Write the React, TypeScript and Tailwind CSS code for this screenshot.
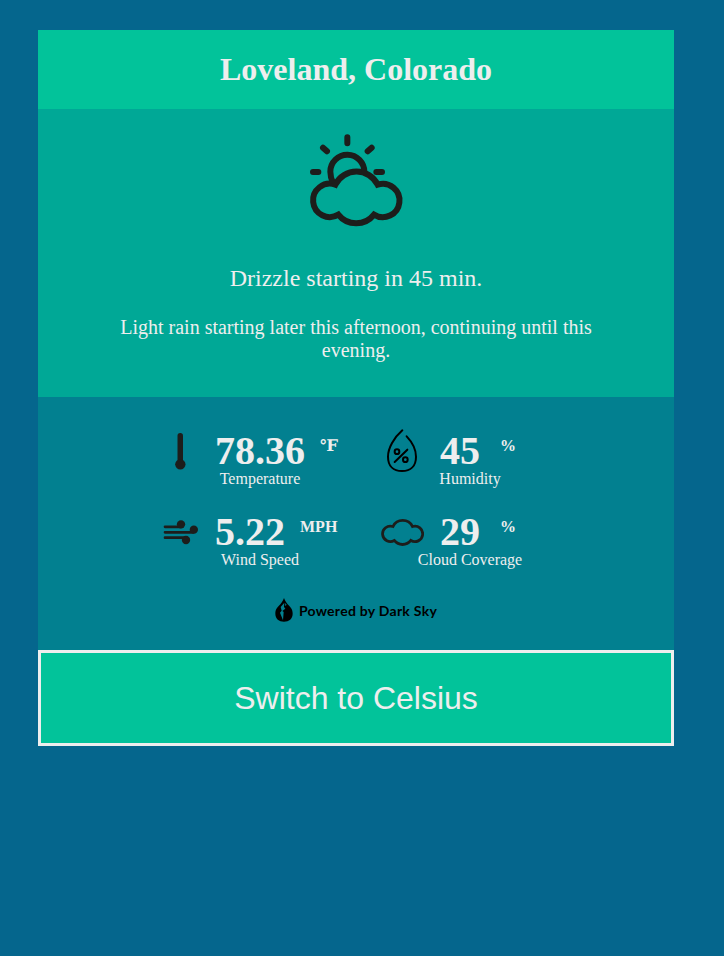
import type { ReactNode } from "react";

const cloudPath =
  "M118 182A50 50 0 1 0 127 272A68 68 0 0 0 234 272A50 50 0 1 0 245 182A71 71 0 0 0 118 182Z";

function PartlyCloudyIcon() {
  return (
    <svg className="h-28 w-30" viewBox="0 0 360 336" fill="none" stroke="#1d1d1b" strokeWidth="18">
      <path d={cloudPath} />
      <path d="M111 176Q103 159 103 143A51 51 0 0 1 205 144" />
      <path
        strokeLinecap="round"
        d="M154 40V58M81 71L93 82M227 71L215 82M51 144H67M241 144H258"
      />
    </svg>
  );
}

function ThermometerIcon() {
  return (
    <svg className="h-[37px] w-[11px]" viewBox="74 38 33 111" fill="#1d1d1b">
      <rect x="81.500" y="38" width="16.500" height="90" rx="8" />
      <circle cx="90" cy="132" r="15.5" />
    </svg>
  );
}

function HumidityIcon() {
  return (
    <svg className="mr-[2px] h-11 w-8" viewBox="48 27 96 132" fill="none" stroke="#000" strokeWidth="6" strokeLinecap="round">
      <path d="M97 31C72 53 54 84 54 110C54 138 70 153 96 153C122 153 138 138 138 110C138 87 127 67 110 49" />
      <circle cx="81" cy="95" r="7" />
      <circle cx="106" cy="119" r="7" />
      <path d="M74 126L112 89" />
    </svg>
  );
}

function WindIcon() {
  return (
    <svg className="ml-[2px] h-[26px] w-9" viewBox="40 45 108 78" fill="#1d1d1b" stroke="#1d1d1b">
      <path d="M46 68.500H94M46 85H131M46 101H107" strokeWidth="8" strokeLinecap="round" />
      <g stroke="none">
        <circle cx="94" cy="61" r="12.500" />
        <circle cx="132.500" cy="77" r="12.500" />
        <circle cx="109" cy="108" r="12.500" />
      </g>
    </svg>
  );
}

function CloudIcon() {
  return (
    <svg className="mr-[2px] h-[27px] w-[43px]" viewBox="41 134 278 173" fill="none" stroke="#1d1d1b" strokeWidth="18">
      <path d={cloudPath} />
    </svg>
  );
}

function DarkSkyLogo() {
  return (
    <svg className="h-6 w-[18px]" viewBox="0 0 54 72">
      <path
        d="M27 0C30 8 33 12 38 19C46 28 53 33 53 47C53 62 42 71 27 71C12 71 1 62 1 47C1 33 8 28 16 19C21 12 24 8 27 0Z"
        fill="#000"
      />
      <path d="M28 14L17 27L20 38L15 44L24 67L26 42L22 39L31 32L27 27Z" fill="#028090" />
      <path d="M30 15L31 24L35 20Z" fill="#028090" />
    </svg>
  );
}

type StatProps = {
  icon: ReactNode;
  value: string;
  unit: string;
  label: string;
  body: string;
  gap: string;
};

function Stat({ icon, value, unit, label, body, gap }: StatProps) {
  return (
    <div className="flex h-[81px]">
      <div className="flex h-[54px] w-[70px] shrink-0 items-center justify-center">{icon}</div>
      <div className={`flex flex-col items-center ${body}`}>
        <div className={`flex h-10 w-full items-start ${gap}`}>
          <span className="text-[40px] leading-[40px] font-bold">{value}</span>
          <span className="pt-[6px] font-['Liberation_Serif','DejaVu_Serif',serif] text-base leading-[18px] font-bold">
            {unit}
          </span>
        </div>
        <span className="-mt-px text-base leading-[18px] whitespace-nowrap">{label}</span>
      </div>
    </div>
  );
}

export default function App() {
  return (
    <div className="min-h-screen bg-[#05668d] px-[38px] pt-[30px] font-['Liberation_Serif',serif] text-[#eee]">
      <main className="w-[636px]">
        <header className="flex h-[79px] items-center justify-center bg-[#02c39a]">
          <h1 className="text-[32px] leading-[37px] font-bold">Loveland, Colorado</h1>
        </header>
        <section className="flex h-[288px] flex-col items-center bg-[#00a896] pt-[15px] text-center">
          <PartlyCloudyIcon />
          <p className="mt-[28px] text-2xl leading-[28px]">Drizzle starting in 45 min.</p>
          <p className="mt-[24px] w-[509px] text-xl leading-[23px]">
            Light rain starting later this afternoon, continuing until this evening.
          </p>
        </section>
        <section className="h-[253px] bg-[#028090] pt-[27px]">
          <div className="grid grid-cols-[223px_1fr] pl-[107px]">
            <Stat icon={<ThermometerIcon />} value="78.36" unit="℉" label="Temperature" body="w-[90px] pt-[7px]" gap="gap-[15px]" />
            <Stat icon={<HumidityIcon />} value="45" unit="%" label="Humidity" body="ml-[2px] w-[60px] pt-[7px]" gap="gap-5" />
            <Stat icon={<WindIcon />} value="5.22" unit="MPH" label="Wind Speed" body="w-[90px] pt-[7px]" gap="gap-[15px]" />
            <Stat icon={<CloudIcon />} value="29" unit="%" label="Cloud Coverage" body="ml-[2px] w-[60px] pt-[7px]" gap="gap-5" />
          </div>
          <div className="mt-[12px] flex items-center justify-center gap-[6px] text-black">
            <DarkSkyLogo />
            <span className="pt-px font-[Lato,sans-serif] text-[14px] leading-[23px] font-bold tracking-[0.27px]">
              Powered by Dark Sky
            </span>
          </div>
        </section>
        <button className="block h-24 w-full border-3 border-[#eee] bg-[#02c39a] font-['Liberation_Sans',sans-serif] text-[32px] leading-[37px]">
          Switch to Celsius
        </button>
      </main>
    </div>
  );
}
